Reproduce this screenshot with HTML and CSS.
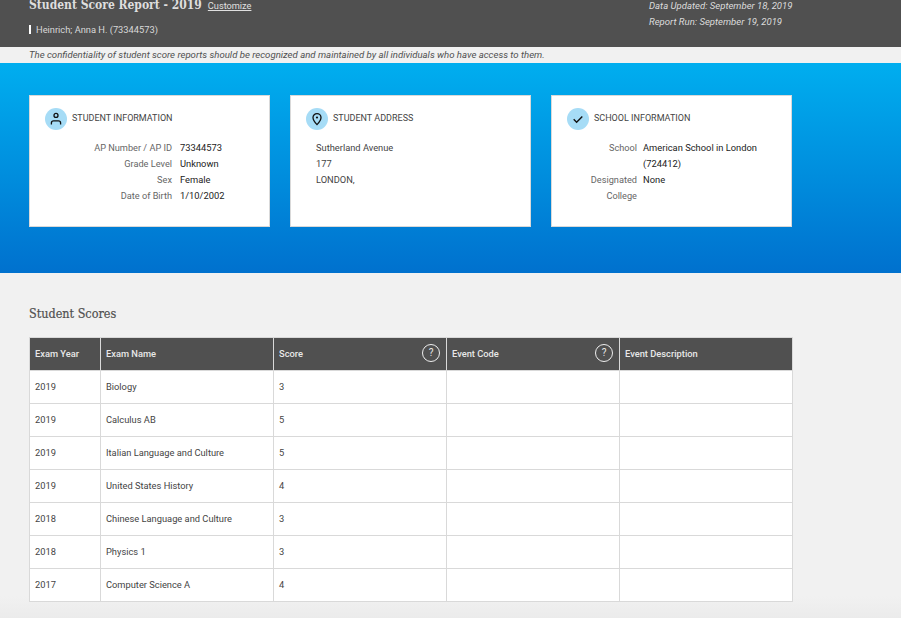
FILE: index.html
```html
<!DOCTYPE html>
<html>
<head>
  <meta charset="utf-8"/>
  <link rel="stylesheet" href="styles.css">
  <title>Student Score Report</title>
</head>
<body>
  <div class="report-header">
    <div class="report-title-block">
      <div class="report-title">
        <h1>Student Score Report - 2019</h1>
        <a class="customize" href="#">Customize</a>
      </div>
      <div class="student-name">Heinrich; Anna H. (73344573)</div>
    </div>
    <div class="report-dates">
      <div>Data Updated: September 18, 2019</div>
      <div>Report Run: September 19, 2019</div>
    </div>
  </div>
  <div class="notice">The confidentiality of student score reports should be recognized and maintained by all individuals who have access to them.</div>

  <div class="hero">
    <div class="card">
      <div class="card-head">
        <span class="card-icon">
          <svg width="14" height="14" viewBox="0 0 14 14" fill="none" stroke="#111" stroke-width="1.3">
            <circle cx="7" cy="3.4" r="2"/>
            <path d="M2.4 12.400v-1.500c0-1.300 1-2 2.200-2h4.800c1.200 0 2.200.7 2.200 2v1.500"/>
          </svg>
        </span>
        <h2>STUDENT INFORMATION</h2>
      </div>
      <div class="info-grid info-grid-student">
        <div class="info-label">AP Number / AP ID</div><div class="info-value">73344573</div>
        <div class="info-label">Grade Level</div><div class="info-value">Unknown</div>
        <div class="info-label">Sex</div><div class="info-value">Female</div>
        <div class="info-label">Date of Birth</div><div class="info-value">1/10/2002</div>
      </div>
    </div>

    <div class="card">
      <div class="card-head">
        <span class="card-icon">
          <svg width="14" height="14" viewBox="0 0 14 14" fill="none" stroke="#111" stroke-width="1.3">
            <path d="M7 12.600C4.700 10.300 3 8.300 3 5.600a4 4 0 0 1 8 0c0 2.700-1.700 4.700-4 7z"/>
            <circle cx="7" cy="5.500" r="1.100" fill="#111" stroke="none"/>
          </svg>
        </span>
        <h2>STUDENT ADDRESS</h2>
      </div>
      <div class="address">
        <div>Sutherland Avenue</div>
        <div>177</div>
        <div>LONDON,</div>
      </div>
    </div>

    <div class="card">
      <div class="card-head">
        <span class="card-icon">
          <svg width="14" height="14" viewBox="0 0 14 14" fill="none" stroke="#111" stroke-width="1.4">
            <path d="M2.700 7.300l2.900 2.900 5.700-5.800"/>
          </svg>
        </span>
        <h2>SCHOOL INFORMATION</h2>
      </div>
      <div class="info-grid info-grid-school">
        <div class="info-label">School</div><div class="info-value">American School in London (724412)</div>
        <div class="info-label">Designated College</div><div class="info-value">None</div>
      </div>
    </div>
  </div>

  <div class="scores">
    <h2 class="scores-title">Student Scores</h2>
    <table class="score-table">
      <thead>
        <tr>
          <th class="col-year">Exam Year</th>
          <th class="col-name">Exam Name</th>
          <th class="col-score"><div class="th-help">Score <span class="help">?</span></div></th>
          <th class="col-code"><div class="th-help">Event Code <span class="help">?</span></div></th>
          <th>Event Description</th>
        </tr>
      </thead>
      <tbody>
        <tr><td>2019</td><td>Biology</td><td>3</td><td></td><td></td></tr>
        <tr><td>2019</td><td>Calculus AB</td><td>5</td><td></td><td></td></tr>
        <tr><td>2019</td><td>Italian Language and Culture</td><td>5</td><td></td><td></td></tr>
        <tr><td>2019</td><td>United States History</td><td>4</td><td></td><td></td></tr>
        <tr><td>2018</td><td>Chinese Language and Culture</td><td>3</td><td></td><td></td></tr>
        <tr><td>2018</td><td>Physics 1</td><td>3</td><td></td><td></td></tr>
        <tr><td>2017</td><td>Computer Science A</td><td>4</td><td></td><td></td></tr>
      </tbody>
    </table>
  </div>
</body>
</html>
```

FILE: styles.css
```css
html, body {
  height: 100%;
}

body {
  margin: 0;
  overflow: hidden;
  background: linear-gradient(#f1f1f1 0, #f1f1f1 596px, #ebebeb 618px);
  font-family: Roboto, "Liberation Sans", sans-serif;
  color: #505050;
}

.report-header {
  display: flex;
  justify-content: space-between;
  height: 47px;
  padding-left: 29px;
  background: #505050;
  color: #e6e6e6;
  overflow: hidden;
}

.report-title {
  display: flex;
  align-items: baseline;
  gap: 6px;
  margin-top: -4px;
}

.report-title h1 {
  margin: 0;
  font-family: "DejaVu Serif Condensed", "DejaVu Serif", serif;
  font-size: 12px;
  line-height: 18px;
  font-weight: 700;
  color: #dedede;
}

.customize {
  font-size: 9.2px;
  color: #e0e0e0;
}

.student-name {
  margin-top: 11px;
  padding-left: 5px;
  border-left: 2px solid #fff;
  font-size: 9.3px;
  line-height: 9px;
  color: #d8d8d8;
}

.report-dates {
  width: 252px;
  margin-top: -2px;
  font-size: 9.55px;
  font-style: italic;
  line-height: 16px;
  color: #dcdcdc;
}

.notice {
  height: 16px;
  padding-left: 29px;
  font-size: 9.6px;
  font-style: italic;
  line-height: 16px;
  color: #505050;
}

.hero {
  display: flex;
  gap: 20px;
  height: 210px;
  box-sizing: border-box;
  padding: 32px 0 0 29px;
  background: linear-gradient(#00aeef, #0071ce);
}

.card {
  width: 241px;
  height: 132px;
  box-sizing: border-box;
  padding: 12px 15px;
  background: #fff;
  border: 1px solid #d9d9d9;
}

.card-head {
  display: flex;
  align-items: center;
  gap: 5px;
}

.card-head h2 {
  margin: 0 0 2px;
  font-size: 9px;
  font-weight: 400;
  color: #444;
}

.card-icon {
  display: flex;
  align-items: center;
  justify-content: center;
  width: 22px;
  height: 22px;
  border-radius: 50%;
  background: #a6dcf6;
}

.info-grid {
  display: grid;
  margin-top: 10px;
  font-size: 9.2px;
  line-height: 16px;
}

.info-grid-student {
  grid-template-columns: 127px 1fr;
  column-gap: 8px;
}

.info-grid-school {
  grid-template-columns: 70px 125px;
  column-gap: 6px;
}

.info-label {
  text-align: right;
  color: #666;
}

.info-value {
  font-size: 9.35px;
  color: #222;
}

.address {
  margin: 10px 0 0 10px;
  font-size: 9.3px;
  line-height: 16px;
  color: #444;
}

.scores {
  padding: 32px 0 0 29px;
}

.scores-title {
  margin: 0 0 15px;
  font-family: "DejaVu Serif Condensed", "DejaVu Serif", serif;
  font-size: 12.5px;
  line-height: 17px;
  font-weight: 400;
  color: #505050;
  -webkit-text-stroke: 0.2px #505050;
}

.score-table {
  width: 764px;
  table-layout: fixed;
  border-collapse: collapse;
  background: #fff;
  font-size: 9.3px;
  color: #444;
}

.score-table th,
.score-table td {
  height: 33px;
  box-sizing: border-box;
  padding: 0 5px 2px;
  border: 1px solid #d9d9d9;
  text-align: left;
}

.score-table th {
  background: #505050;
  color: #e8e8e8;
  font-weight: 500;
}

.col-year {
  width: 71px;
}

.col-name,
.col-score,
.col-code {
  width: 173px;
}

.th-help {
  display: flex;
  align-items: center;
  justify-content: space-between;
}

.help {
  width: 18px;
  height: 18px;
  margin-right: 1px;
  box-sizing: border-box;
  border: 1px solid #eee;
  border-radius: 50%;
  font-size: 10px;
  font-weight: 400;
  line-height: 16px;
  text-align: center;
}
```
